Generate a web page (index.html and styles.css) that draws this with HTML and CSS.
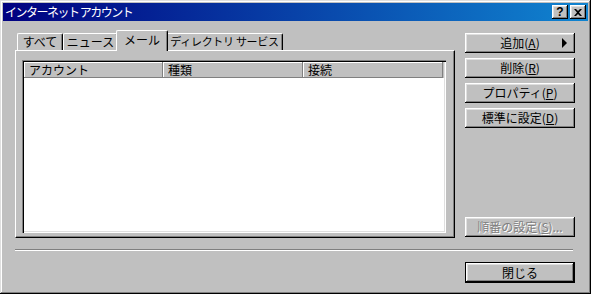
FILE: index.html
```html
<!DOCTYPE html>
<html lang="ja">
<head>
  <meta charset="UTF-8">
  <title>インターネット アカウント</title>
  <link rel="stylesheet" href="styles.css">
</head>
<body>

  <div class="window">
    <div class="titlebar">
      <span class="title">インターネット アカウント</span>
      <div class="caption-btns">
        <span class="cap-btn">?</span>
        <span class="cap-btn close">
          <svg width="8" height="7" viewBox="0 0 8 7"><path d="M0 0h2l2 2 2-2h2L5 3.5 8 7H6L4 5 2 7H0l3-3.5z" fill="#000"/></svg>
        </span>
      </div>
    </div>

    <div class="main">
      <div class="tab-area">
        <div class="tabs">
          <div class="tab t-all">すべて</div>
          <div class="tab t-news">ニュース</div>
          <div class="tab t-mail active">メール</div>
          <div class="tab t-dir">ディレクトリ サービス</div>
        </div>
        <div class="panel">
          <div class="listview">
            <div class="lv-header">
              <div class="col c1">アカウント</div>
              <div class="col c2">種類</div>
              <div class="col c3">接続</div>
            </div>
          </div>
        </div>
      </div>

      <div class="side">
        <button class="btn add">追加(<u>A</u>)<span class="arrow"></span></button>
        <button class="btn">削除(<u>R</u>)</button>
        <button class="btn">プロパティ(<u>P</u>)</button>
        <button class="btn">標準に設定(<u>D</u>)</button>
        <button class="btn order" disabled>順番の設定(<u>S</u>)...</button>
      </div>
    </div>

    <div class="separator"></div>

    <div class="footer">
      <button class="btn default">閉じる</button>
    </div>
  </div>

</body>
</html>
```

FILE: styles.css
```css
body {
  margin: 0;
  background: #c0c0c0;
  font-family: "Noto Sans CJK JP", "DejaVu Sans", sans-serif;
  font-size: 12px;
}

.window {
  width: 591px;
  height: 294px;
  box-sizing: border-box;
  padding: 3px;
  background: #c0c0c0;
  box-shadow: inset -1px -1px #000, inset 1px 1px #dfdfdf, inset -2px -2px #808080, inset 2px 2px #fff;
  display: flex;
  flex-direction: column;
}

.titlebar {
  height: 18px;
  display: flex;
  align-items: center;
  justify-content: space-between;
  padding: 0 2px 0 2px;
  background: linear-gradient(90deg, #000080, #1084d0);
  color: #fff;
}

.title {
  line-height: 18px;
  letter-spacing: -1.5px;
}

.caption-btns {
  display: flex;
  gap: 2px;
}

.cap-btn {
  width: 16px;
  height: 14px;
  box-sizing: border-box;
  background: #c0c0c0;
  box-shadow: inset -1px -1px #000, inset 1px 1px #fff, inset -2px -2px #808080, inset 2px 2px #dfdfdf;
  color: #000;
  font-family: "Liberation Sans", sans-serif;
  font-weight: bold;
  font-size: 12px;
  line-height: 14px;
  text-align: center;
  display: flex;
  align-items: center;
  justify-content: center;
}

.main {
  display: flex;
  gap: 10px;
  padding: 9px 13px 0 12px;
}

.tab-area {
  width: 440px;
}

.tabs {
  height: 20px;
  display: flex;
  align-items: flex-end;
  padding-left: 2px;
}

.tab {
  height: 17px;
  box-sizing: border-box;
  background: #c0c0c0;
  border-top: 1px solid #fff;
  border-left: 1px solid #fff;
  border-right: 1px solid #000;
  box-shadow: inset -1px 0 #808080;
  border-radius: 2px 2px 0 0;
  text-align: center;
  line-height: 15px;
  color: #000;
  white-space: nowrap;
  overflow: hidden;
}

.t-all { width: 46px; }
.t-news { width: 55px; }
.t-mail { width: 52px; }
.t-dir { width: 117px; font-size: 11px; letter-spacing: -0.3px; }

.tab.active {
  height: 21px;
  margin: 0 -2px -1px -2px;
  position: relative;
  z-index: 1;
  line-height: 17px;
}

.panel {
  height: 188px;
  box-sizing: border-box;
  padding: 9px 0 0 6px;
  border-top: 1px solid #fff;
  border-left: 1px solid #fff;
  border-right: 1px solid #000;
  border-bottom: 1px solid #000;
  box-shadow: inset -1px -1px #808080;
}

.listview {
  width: 424px;
  height: 173px;
  box-sizing: border-box;
  padding: 2px;
  background: #fff;
  box-shadow: inset 1px 1px #808080, inset 2px 2px #000, inset -1px -1px #fff, inset -2px -2px #dfdfdf;
}

.lv-header {
  display: flex;
  height: 16px;
  background: #c0c0c0;
}

.col {
  box-sizing: border-box;
  height: 16px;
  line-height: 16px;
  padding-left: 5px;
  box-shadow: inset -1px -1px #808080, inset 1px 1px #fff;
  color: #000;
}

.c1 { width: 139px; }
.c2 { width: 140px; }
.c3 { width: 140px; }

.side {
  width: 110px;
  height: 208px;
  display: flex;
  flex-direction: column;
  gap: 5px;
  padding-top: 3px;
  box-sizing: border-box;
}

.btn {
  width: 110px;
  height: 20px;
  box-sizing: border-box;
  border: none;
  padding: 0;
  background: #c0c0c0;
  box-shadow: inset -1px -1px #000, inset 1px 1px #fff, inset -2px -2px #808080, inset 2px 2px #dfdfdf;
  font-family: "Noto Sans CJK JP", "DejaVu Sans", sans-serif;
  font-size: 12px;
  color: #000;
  line-height: 18px;
  text-align: center;
}

.btn u {
  text-underline-offset: 1px;
}

.add {
  position: relative;
}

.arrow {
  position: absolute;
  right: 8px;
  top: 5px;
  width: 0;
  height: 0;
  border-top: 5px solid transparent;
  border-bottom: 5px solid transparent;
  border-left: 5px solid #000;
}

.order {
  margin-top: auto;
  margin-bottom: 1px;
  color: #808080;
  text-shadow: 1px 1px #fff;
}

.separator {
  height: 2px;
  margin: 11px 15px 0 12px;
  box-shadow: inset 0 1px #808080, inset 0 -1px #fff;
}

.footer {
  display: flex;
  justify-content: flex-end;
  padding: 11px 13px 0 0;
}

.default {
  height: 21px;
  border: 1px solid #000;
}
```
